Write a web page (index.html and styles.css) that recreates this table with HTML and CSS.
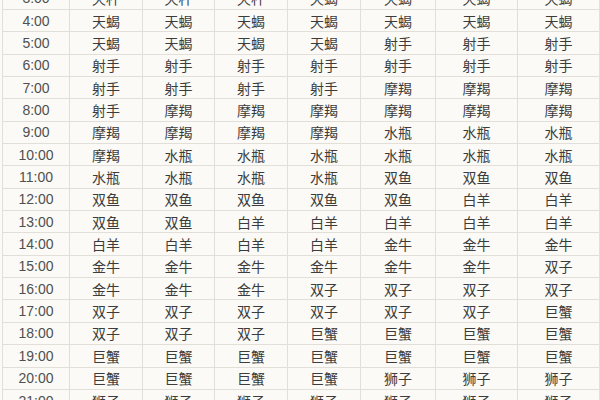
FILE: index.html
```html
<!DOCTYPE html>
<html lang="zh">
<head>
<meta charset="utf-8">
<link rel="stylesheet" href="styles.css">
</head>
<body>
<div class="frame">
<div class="grid">
<div class="t">3:00</div><div>天秤</div><div>天秤</div><div>天秤</div><div>天蝎</div><div>天蝎</div><div>天蝎</div><div>天蝎</div>
<div class="t">4:00</div><div>天蝎</div><div>天蝎</div><div>天蝎</div><div>天蝎</div><div>天蝎</div><div>天蝎</div><div>天蝎</div>
<div class="t">5:00</div><div>天蝎</div><div>天蝎</div><div>天蝎</div><div>天蝎</div><div>射手</div><div>射手</div><div>射手</div>
<div class="t">6:00</div><div>射手</div><div>射手</div><div>射手</div><div>射手</div><div>射手</div><div>射手</div><div>射手</div>
<div class="t">7:00</div><div>射手</div><div>射手</div><div>射手</div><div>射手</div><div>摩羯</div><div>摩羯</div><div>摩羯</div>
<div class="t">8:00</div><div>射手</div><div>摩羯</div><div>摩羯</div><div>摩羯</div><div>摩羯</div><div>摩羯</div><div>摩羯</div>
<div class="t">9:00</div><div>摩羯</div><div>摩羯</div><div>摩羯</div><div>摩羯</div><div>水瓶</div><div>水瓶</div><div>水瓶</div>
<div class="t">10:00</div><div>摩羯</div><div>水瓶</div><div>水瓶</div><div>水瓶</div><div>水瓶</div><div>水瓶</div><div>水瓶</div>
<div class="t">11:00</div><div>水瓶</div><div>水瓶</div><div>水瓶</div><div>水瓶</div><div>双鱼</div><div>双鱼</div><div>双鱼</div>
<div class="t">12:00</div><div>双鱼</div><div>双鱼</div><div>双鱼</div><div>双鱼</div><div>双鱼</div><div>白羊</div><div>白羊</div>
<div class="t">13:00</div><div>双鱼</div><div>双鱼</div><div>白羊</div><div>白羊</div><div>白羊</div><div>白羊</div><div>白羊</div>
<div class="t">14:00</div><div>白羊</div><div>白羊</div><div>白羊</div><div>白羊</div><div>金牛</div><div>金牛</div><div>金牛</div>
<div class="t">15:00</div><div>金牛</div><div>金牛</div><div>金牛</div><div>金牛</div><div>金牛</div><div>金牛</div><div>双子</div>
<div class="t">16:00</div><div>金牛</div><div>金牛</div><div>金牛</div><div>双子</div><div>双子</div><div>双子</div><div>双子</div>
<div class="t">17:00</div><div>双子</div><div>双子</div><div>双子</div><div>双子</div><div>双子</div><div>双子</div><div>巨蟹</div>
<div class="t">18:00</div><div>双子</div><div>双子</div><div>双子</div><div>巨蟹</div><div>巨蟹</div><div>巨蟹</div><div>巨蟹</div>
<div class="t">19:00</div><div>巨蟹</div><div>巨蟹</div><div>巨蟹</div><div>巨蟹</div><div>巨蟹</div><div>巨蟹</div><div>巨蟹</div>
<div class="t">20:00</div><div>巨蟹</div><div>巨蟹</div><div>巨蟹</div><div>巨蟹</div><div>狮子</div><div>狮子</div><div>狮子</div>
<div class="t">21:00</div><div>狮子</div><div>狮子</div><div>狮子</div><div>狮子</div><div>狮子</div><div>狮子</div><div>狮子</div>
</div>
</div>
</body>
</html>
```
FILE: styles.css
```css
html, body {
  margin: 0;
  padding: 0;
  background: #fbfaf6;
}
.frame {
  width: 600px;
  height: 400px;
  overflow: hidden;
  padding-left: 2px;
  box-sizing: border-box;
}
.grid {
  display: grid;
  grid-template-columns: 67px 73px 72px 73px 73px 75px 82px 1fr;
  grid-auto-rows: 22.35px;
  margin-top: -12.35px;
  border-left: 1px solid #e2dfd9;
  font-family: "Noto Sans CJK SC", "Liberation Sans", sans-serif;
  font-size: 14px;
  color: #3c3c3c;
}
.grid > div {
  box-sizing: border-box;
  border-right: 1px solid #e2dfd9;
  border-bottom: 1px solid #e2dfd9;
  display: flex;
  align-items: center;
  justify-content: center;
  line-height: 1;
}
.grid > .t {
  font-family: "Liberation Sans", Arial, sans-serif;
  font-size: 14px;
  color: #505050;
}
```
